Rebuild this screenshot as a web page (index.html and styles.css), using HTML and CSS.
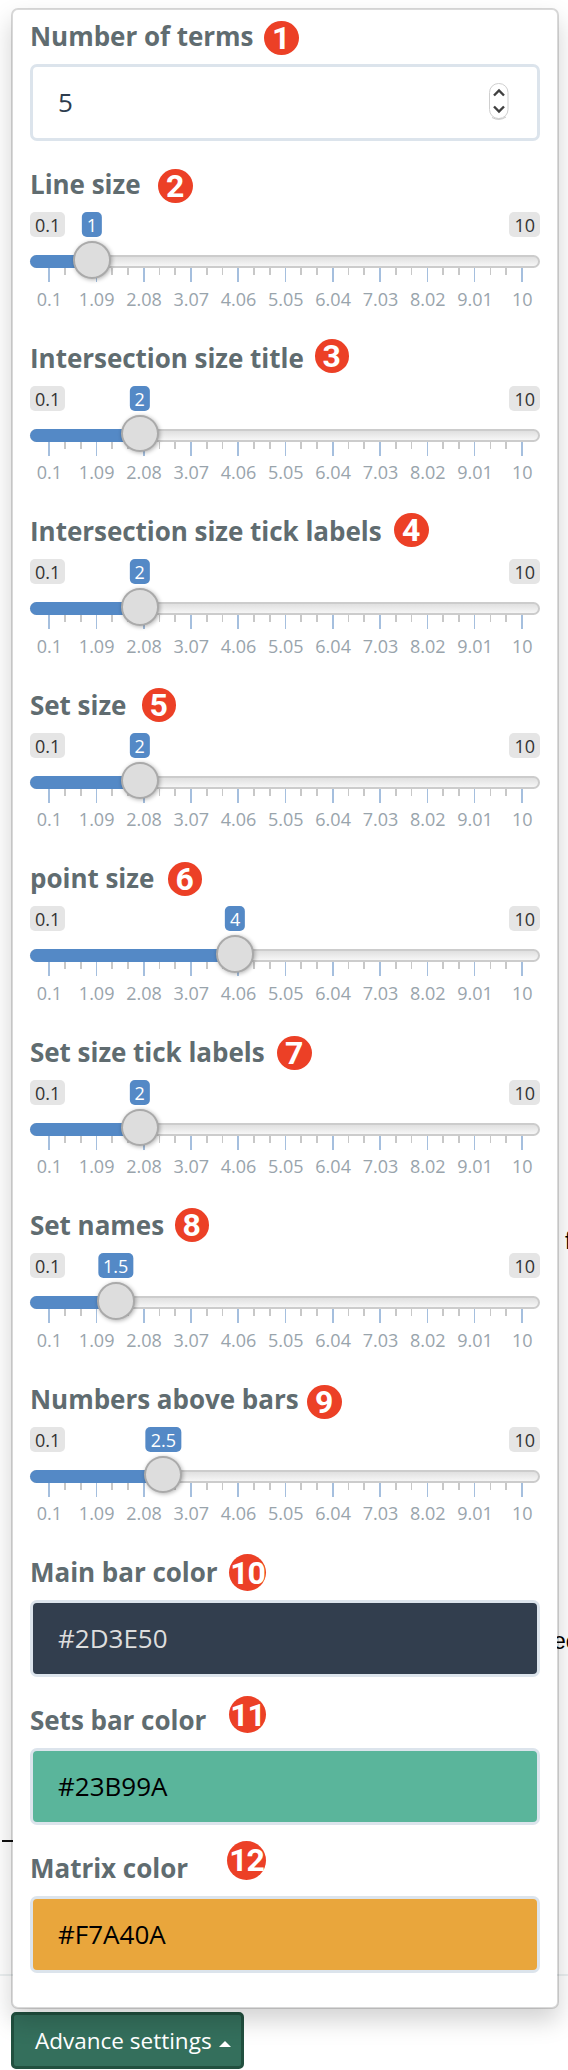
FILE: index.html
```html
<!DOCTYPE html>
<html lang="en">
<head>
<meta charset="utf-8">
<title>Advance settings</title>
<link rel="stylesheet" href="styles.css">
</head>
<body>
<svg width="0" height="0" class="defs">
  <symbol id="ticks" viewBox="0 0 510 14">
    <path fill="#a5bfde" d="M18 0h2v14h-2zM66 0h1v14h-1zM113 0h2v14h-2zM160 0h2v14h-2zM207 0h2v14h-2zM255 0h1v14h-1zM302 0h2v14h-2zM349 0h2v14h-2zM397 0h1v14h-1zM444 0h1v14h-1zM491 0h2v14h-2z"/>
    <path fill="#c8c8c8" d="M34 0h2v7h-2zM50 0h2v7h-2zM81 0h2v7h-2zM97 0h2v7h-2zM129 0h1v7h-1zM144 0h2v7h-2zM176 0h2v7h-2zM192 0h1v7h-1zM223 0h2v7h-2zM239 0h2v7h-2zM270 0h2v7h-2zM286 0h2v7h-2zM318 0h1v7h-1zM333 0h2v7h-2zM365 0h2v7h-2zM381 0h1v7h-1zM412 0h2v7h-2zM428 0h2v7h-2zM460 0h1v7h-1zM475 0h2v7h-2z"/>
  </symbol>
</svg>
<div class="page">
  <span class="behind word-f">f</span>
  <span class="behind word-ec">ec</span>
  <span class="dash"></span>
  <span class="rule"></span>

  <div class="panel">
    <div class="field">
      <label class="label">Number of terms</label><span class="marker" style="left:234px;top:11px">1</span>
      <div class="input">5
        <svg class="spinner" width="24" height="42" viewBox="0 0 24 42"><rect x="2.5" y="2.5" width="18.5" height="35" rx="9" fill="#fff" stroke="#cfcfcf"/><path d="M5 36.5 Q12 40.5 19 36" fill="none" stroke="#bbb" stroke-width=".8"/><path d="M7 14.5l5-5 5 5M7 25.5l5 5 5-5" fill="none" stroke="#404040" stroke-width="2.4"/></svg>
      </div>
    </div>

    <div class="field slider" style="--v:1">
      <label class="label">Line size</label><span class="marker" style="left:128px;top:11px">2</span>
      <div class="bubbles"><span class="bubble">0.1</span><span class="bubble">10</span><span class="value">1</span></div>
      <div class="track"><i class="fill"></i><i class="knob"></i></div>
      <svg class="ticks"><use href="#ticks"/></svg>
      <div class="scale"><span>0.1</span><span>1.09</span><span>2.08</span><span>3.07</span><span>4.06</span><span>5.05</span><span>6.04</span><span>7.03</span><span>8.02</span><span>9.01</span><span>10</span></div>
    </div>

    <div class="field slider" style="--v:2">
      <label class="label">Intersection size title</label><span class="marker" style="left:284.5px;top:7px">3</span>
      <div class="bubbles"><span class="bubble">0.1</span><span class="bubble">10</span><span class="value">2</span></div>
      <div class="track"><i class="fill"></i><i class="knob"></i></div>
      <svg class="ticks"><use href="#ticks"/></svg>
      <div class="scale"><span>0.1</span><span>1.09</span><span>2.08</span><span>3.07</span><span>4.06</span><span>5.05</span><span>6.04</span><span>7.03</span><span>8.02</span><span>9.01</span><span>10</span></div>
    </div>

    <div class="field slider" style="--v:2">
      <label class="label">Intersection size tick labels</label><span class="marker" style="left:364px;top:8px">4</span>
      <div class="bubbles"><span class="bubble">0.1</span><span class="bubble">10</span><span class="value">2</span></div>
      <div class="track"><i class="fill"></i><i class="knob"></i></div>
      <svg class="ticks"><use href="#ticks"/></svg>
      <div class="scale"><span>0.1</span><span>1.09</span><span>2.08</span><span>3.07</span><span>4.06</span><span>5.05</span><span>6.04</span><span>7.03</span><span>8.02</span><span>9.01</span><span>10</span></div>
    </div>

    <div class="field slider" style="--v:2">
      <label class="label">Set size</label><span class="marker" style="left:111.5px;top:9px">5</span>
      <div class="bubbles"><span class="bubble">0.1</span><span class="bubble">10</span><span class="value">2</span></div>
      <div class="track"><i class="fill"></i><i class="knob"></i></div>
      <svg class="ticks"><use href="#ticks"/></svg>
      <div class="scale"><span>0.1</span><span>1.09</span><span>2.08</span><span>3.07</span><span>4.06</span><span>5.05</span><span>6.04</span><span>7.03</span><span>8.02</span><span>9.01</span><span>10</span></div>
    </div>

    <div class="field slider" style="--v:4">
      <label class="label">point size</label><span class="marker" style="left:137.5px;top:10px">6</span>
      <div class="bubbles"><span class="bubble">0.1</span><span class="bubble">10</span><span class="value">4</span></div>
      <div class="track"><i class="fill"></i><i class="knob"></i></div>
      <svg class="ticks"><use href="#ticks"/></svg>
      <div class="scale"><span>0.1</span><span>1.09</span><span>2.08</span><span>3.07</span><span>4.06</span><span>5.05</span><span>6.04</span><span>7.03</span><span>8.02</span><span>9.01</span><span>10</span></div>
    </div>

    <div class="field slider" style="--v:2">
      <label class="label">Set size tick labels</label><span class="marker" style="left:247px;top:10px">7</span>
      <div class="bubbles"><span class="bubble">0.1</span><span class="bubble">10</span><span class="value">2</span></div>
      <div class="track"><i class="fill"></i><i class="knob"></i></div>
      <svg class="ticks"><use href="#ticks"/></svg>
      <div class="scale"><span>0.1</span><span>1.09</span><span>2.08</span><span>3.07</span><span>4.06</span><span>5.05</span><span>6.04</span><span>7.03</span><span>8.02</span><span>9.01</span><span>10</span></div>
    </div>

    <div class="field slider" style="--v:1.5">
      <label class="label">Set names</label><span class="marker" style="left:144.5px;top:9px">8</span>
      <div class="bubbles"><span class="bubble">0.1</span><span class="bubble">10</span><span class="value">1.5</span></div>
      <div class="track"><i class="fill"></i><i class="knob"></i></div>
      <svg class="ticks"><use href="#ticks"/></svg>
      <div class="scale"><span>0.1</span><span>1.09</span><span>2.08</span><span>3.07</span><span>4.06</span><span>5.05</span><span>6.04</span><span>7.03</span><span>8.02</span><span>9.01</span><span>10</span></div>
    </div>

    <div class="field slider" style="--v:2.5">
      <label class="label">Numbers above bars</label><span class="marker" style="left:277px;top:12px">9</span>
      <div class="bubbles"><span class="bubble">0.1</span><span class="bubble">10</span><span class="value">2.5</span></div>
      <div class="track"><i class="fill"></i><i class="knob"></i></div>
      <svg class="ticks"><use href="#ticks"/></svg>
      <div class="scale"><span>0.1</span><span>1.09</span><span>2.08</span><span>3.07</span><span>4.06</span><span>5.05</span><span>6.04</span><span>7.03</span><span>8.02</span><span>9.01</span><span>10</span></div>
    </div>

    <div class="field">
      <label class="label">Main bar color</label><span class="marker wide" style="left:199px;top:8px">10</span>
      <div class="input navy">#2D3E50</div>
    </div>
    <div class="field">
      <label class="label">Sets bar color</label><span class="marker wide" style="left:199px;top:2px">11</span>
      <div class="input green">#23B99A</div>
    </div>
    <div class="field">
      <label class="label">Matrix color</label><span class="marker widest" style="left:197px;top:-1px">12</span>
      <div class="input orange">#F7A40A</div>
    </div>
  </div>

  <button class="toggle" type="button">Advance settings<i class="caret"></i></button>
</div>
</body>
</html>
```
FILE: styles.css
```css
* { box-sizing: border-box; }
body { margin: 0; background: #fff; font-family: "Open Sans", sans-serif; }
.defs { position: absolute; }
.page { position: relative; width: 568px; height: 2070px; padding: 8px 0 0 11px; overflow: hidden; }

/* page content that the open menu partly covers */
.behind { position: absolute; font: 23px/28px "Liberation Sans", sans-serif; color: #000; }
.word-f { left: 565px; top: 1227px; }
.word-ec { left: 553px; top: 1627px; }
.dash { position: absolute; left: 2px; top: 1840px; width: 12px; height: 2px; background: #111; }
.rule { position: absolute; left: 0; top: 1974px; width: 568px; height: 2px; background: #ecf0f1; }

.panel {
  position: relative; z-index: 1;
  width: 548px; height: 2001px; padding: 0 17px;
  background: #fff; background-clip: padding-box;
  border: 2px solid rgba(0, 0, 0, .15); border-radius: 7px;
  box-shadow: 0 12px 24px rgba(0, 0, 0, .175);
}
.field { position: relative; height: 148px; }
.slider { height: 173.5px; --c: calc(18.8px + (var(--v) - 0.1) * 47.78px); }
.label {
  display: block; height: 54px; line-height: 52px;
  font-size: 26px; font-weight: 700; letter-spacing: -.03px; color: #606c70; white-space: nowrap;
}
.marker {
  position: absolute; width: 34.5px; height: 34px; border-radius: 50%;
  background: #ec4026; color: #fff; text-align: center;
  font: bold 32px/35px Roboto, "Liberation Sans", sans-serif;
}
.wide { width: 37px; height: 37px; line-height: 39px; letter-spacing: -1px; }
.widest { width: 39px; height: 39px; line-height: 39px; letter-spacing: -1px; }

.input {
  position: relative; height: 77px; padding: 0 25px; line-height: 70px;
  border: 3px solid #dce4ec; border-radius: 7px;
  font-size: 26px; color: #2d3c4e;
}
.navy { background: #323e4e; color: #ddd; }
.green { background: #5ab59b; color: #000; }
.orange { background: #e9a63c; color: #000; }
.spinner { position: absolute; right: 26px; top: 14px; }

.bubbles { position: relative; display: flex; justify-content: space-between; height: 43px; }
.bubble, .value {
  height: 25px; padding: 0 5px; border-radius: 5px;
  font-size: 18px; line-height: 26px;
  background: #e5e5e5; color: #333;
}
.value {
  position: absolute; left: var(--c); transform: translateX(-50%);
  background: #5489c6; color: #fff;
}
.track {
  position: relative; height: 13px;
  border: 2px solid #ccc; border-radius: 7px;
  background: linear-gradient(#e0e0e0, #f6f6f6);
}
.fill {
  position: absolute; left: -2px; top: -2px; width: var(--c); height: 13px;
  background: #5489c6; border-radius: 7px 0 0 7px;
}
.knob {
  position: absolute; z-index: 1; left: calc(var(--c) - 21px); top: -16px; width: 38px; height: 37.5px;
  background: #ddd; border: 2px solid #aaa; border-radius: 50%;
  box-shadow: 1px 1px 4px rgba(0, 0, 0, .3);
}
.ticks { display: block; width: 510px; height: 14px; }
.scale { display: flex; margin: 4.5px -5px 0 -4.3px; }
.scale span {
  flex: 0 0 47.3px; text-align: center;
  font-size: 18px; line-height: 24px; color: #99a4ac;
}

.toggle {
  display: flex; align-items: center; gap: 7px;
  width: 233px; height: 57px; margin-top: 3px; padding: 0 0 0 21px;
  font: 22.5px/30px "Open Sans", sans-serif; color: #fff;
  background: #346f5c; border: 3px solid #21503f; border-radius: 5px;
}
.caret { border: 6px solid transparent; border-top: 0; border-bottom-color: #fff; margin-top: 6px; }
```
